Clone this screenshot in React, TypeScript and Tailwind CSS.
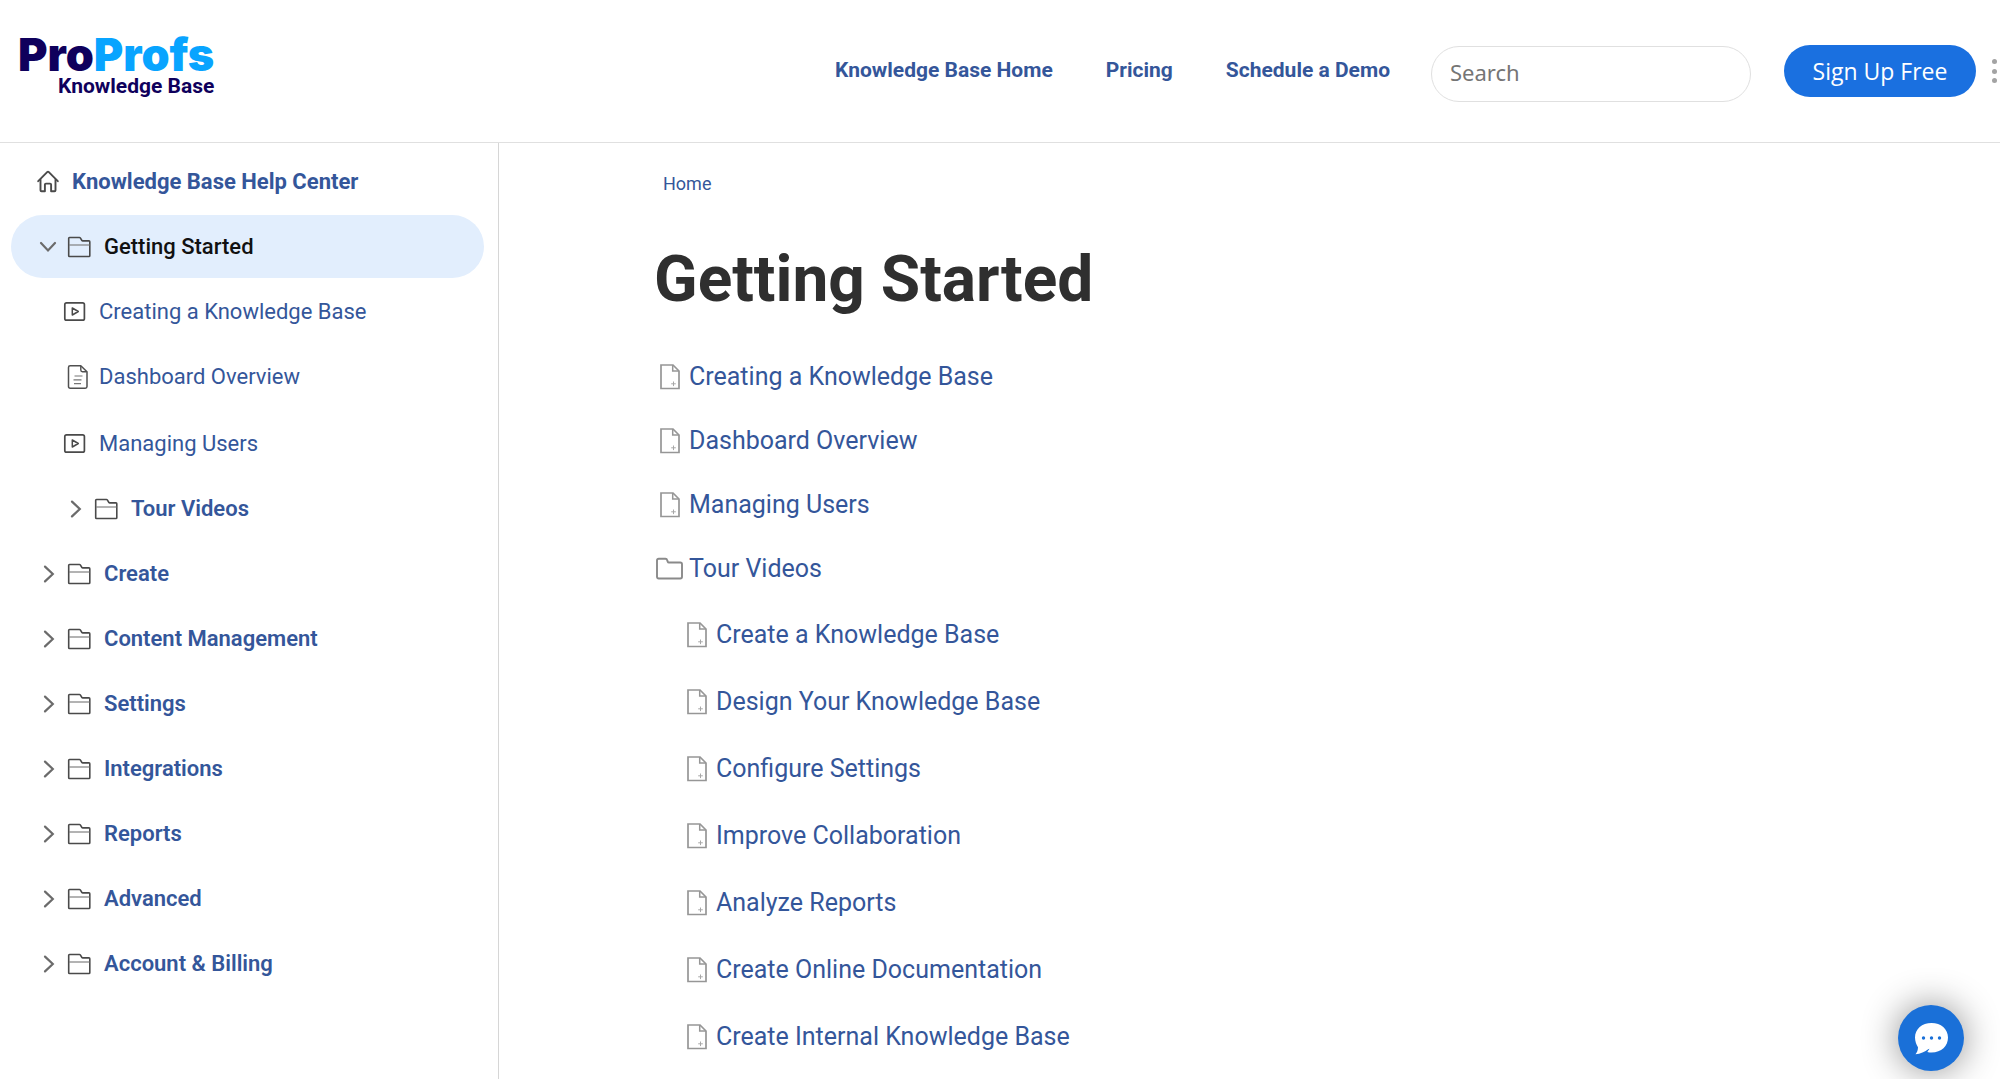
import React from "react";

function HomeIcon() {
  return (
    <svg className="h-6 w-6 shrink-0" viewBox="0 0 24 24" fill="none" stroke="#4a4a4a" strokeWidth="1.9" strokeLinejoin="round" strokeLinecap="round">
      <path d="M2.2 11.2 11.4 1.900q.6-.6 1.200 0l9.200 9.300" />
      <path d="M4.500 9.800v10.400q0 1 1 1h3.400v-6.600q0-1 1-1h4.200q1 0 1 1v6.600h3.400q1 0 1-1V9.800" />
    </svg>
  );
}

function ChevronDown() {
  return (
    <svg className="h-5 w-5 shrink-0" viewBox="0 0 20 20" fill="none" stroke="#6b6b6b" strokeWidth="2.2" strokeLinecap="round">
      <path d="M3 6 10 13.400 17 6" />
    </svg>
  );
}

function ChevronRight() {
  return (
    <svg className="h-5 w-5 shrink-0" viewBox="0 0 20 20" fill="none" stroke="#6b6b6b" strokeWidth="2.2" strokeLinecap="round">
      <path d="M7 2.600 14.800 10 7 17.400" />
    </svg>
  );
}

function FolderIcon() {
  return (
    <svg className="h-6 w-6 shrink-0" viewBox="0 0 24 24" fill="none" stroke="#4a4a4a" strokeLinejoin="round">
      <path strokeWidth="1.6" d="M1.700 3.300q0-.8.8-.8h10q.5 0 .8.4l1.600 2.600q.3.400.8.400h6.300q.8 0 .8.8v14q0 .8-.8.8H2.500q-.8 0-.8-.8z" />
      <path strokeWidth="1.2" stroke="#808080" d="M2 10h20.500" />
    </svg>
  );
}

function PlayIcon() {
  return (
    <svg className="h-6 w-6 shrink-0" viewBox="0 0 24 24" fill="none" stroke="#4a4a4a" strokeLinejoin="round">
      <rect strokeWidth="1.7" x="1.800" y="2.800" width="19.600" height="17.400" rx="1.800" />
      <path strokeWidth="1.5" d="M9.300 8v7l6-3.500z" />
    </svg>
  );
}

function ArticleIcon() {
  return (
    <svg className="h-6 w-6 shrink-0" viewBox="0 0 24 24" fill="none" stroke="#505050" strokeLinejoin="round">
      <path strokeWidth="1.5" d="M4.200.8h10.600l6.200 6v14.700q0 1.700-1.700 1.700H4.200q-1.700 0-1.700-1.700V2.500Q2.500.8 4.200.8z" />
      <path strokeWidth="1.400" d="M14.800.9v4.200q0 1.600 1.600 1.600h4.400" />
      <path strokeWidth="1.200" stroke="#777" d="M8.500 11h8M7.500 14.800h8M8 18.600h7" />
    </svg>
  );
}

function PageIcon() {
  return (
    <svg className="h-[26px] w-5 shrink-0" viewBox="0 0 20 26" fill="none" stroke="#969696">
      <path strokeWidth="1.700" d="M1 1h12l6 6v17.500H1z" />
      <path strokeWidth="1.500" d="M12.700 1v6H19" />
      <path strokeWidth="1" stroke="#a8a8a8" d="M13.500 17.500v4.600M11.200 19.800h4.600" />
    </svg>
  );
}

function OutlineFolder() {
  return (
    <svg className="h-[26px] w-7 shrink-0" viewBox="0 0 28 26" fill="none" stroke="#8a8a8a" strokeWidth="1.900" strokeLinejoin="round">
      <path d="M1 4.500Q1 2.800 2.700 2.800h6.800q1.300 0 1.700 1.300l.5 1.500q.3.900 1.200.9h11.400Q26 6.500 26 8.200v12.600q0 1.700-1.700 1.700H2.700Q1 22.500 1 20.800z" />
    </svg>
  );
}

const topics = ["Create", "Content Management", "Settings", "Integrations", "Reports", "Advanced", "Account & Billing"];
const articles = ["Creating a Knowledge Base", "Dashboard Overview", "Managing Users"];
const tourVideos = [
  "Create a Knowledge Base",
  "Design Your Knowledge Base",
  "Configure Settings",
  "Improve Collaboration",
  "Analyze Reports",
  "Create Online Documentation",
  "Create Internal Knowledge Base",
];

const row = "flex h-[63px] w-full items-center text-left";

function Topic({ label, nested = false }: { label: string; nested?: boolean }) {
  return (
    <li>
      <button type="button" aria-expanded="false" className={`${row} font-semibold ${nested ? "pl-[54px]" : "pl-[27px]"}`}>
        <ChevronRight />
        <span className="mr-[13px] ml-[9px]">
          <FolderIcon />
        </span>
        {label}
      </button>
    </li>
  );
}

function SidebarLink({ label, icon, indent }: { label: string; icon: React.ReactNode; indent: string }) {
  return (
    <a href="#" className={`${row} ${indent}`}>
      {icon}
      {label}
    </a>
  );
}

export default function App() {
  return (
    <div className="flex min-h-screen flex-col bg-white font-['Roboto',sans-serif] text-[#34569a]">
      <header className="flex h-[143px] shrink-0 items-start border-b border-[#e0e0e0] pr-[2px]">
        <a href="#" className="mt-[34px] ml-[18px] flex flex-col items-end text-[#0f005c]">
          <span className="font-['Inter',sans-serif] text-[45px] leading-[42px] font-black">
            Pro<span className="text-[#08a4ff]">Profs</span>
          </span>
          <span className="text-[21px] leading-5 font-bold">Knowledge Base</span>
        </a>
        <nav className="mt-14 ml-auto flex gap-[53px] text-[21px] leading-7 font-bold">
          <a href="#">Knowledge Base Home</a>
          <a href="#">Pricing</a>
          <a href="#">Schedule a Demo</a>
        </nav>
        <input
          type="search"
          aria-label="Search"
          placeholder="Search"
          className="mt-[46px] ml-[41px] h-14 w-80 rounded-full border border-[#e0e0e0] px-[18px] pb-1 font-['Noto_Sans',sans-serif] text-[22px] text-gray-700 placeholder:text-[#757575]"
        />
        <button
          type="button"
          className="mt-[45px] ml-[33px] h-[52px] w-48 rounded-full bg-[#1a70e0] font-['Open_Sans',sans-serif] text-[23px] text-white"
        >
          Sign Up Free
        </button>
        <button type="button" aria-label="More options" className="mt-[58px] ml-4 flex h-[26px] w-[6px] flex-col justify-between py-px">
          <span className="h-[5px] w-[5px] rounded-full bg-[#a3a3a3]" />
          <span className="h-[5px] w-[5px] rounded-full bg-[#a3a3a3]" />
          <span className="h-[5px] w-[5px] rounded-full bg-[#a3a3a3]" />
        </button>
      </header>

      <div className="flex flex-1">
        <aside className="w-1/4 max-w-[499px] shrink-0 border-r border-[#d6d6d6] pt-[7px] pr-3.5 pl-[11px] text-[22px]">
          <nav aria-label="Topics">
            <ul className="flex flex-col gap-0.5">
              <li>
                <a href="#" className={`${row} gap-3 pl-[25px] font-bold`}>
                  <HomeIcon />
                  Knowledge Base Help Center
                </a>
              </li>
              <li>
                <button type="button" aria-expanded="true" className={`${row} rounded-full bg-[#e2eefd] pl-[27px] font-medium text-[#111]`}>
                  <ChevronDown />
                  <span className="mr-[13px] ml-[9px]">
                    <FolderIcon />
                  </span>
                  Getting Started
                </button>
                <ul className="mt-0.5 flex flex-col gap-0.5">
                  <li>
                    <SidebarLink label="Creating a Knowledge Base" icon={<PlayIcon />} indent="gap-3 pl-[52px]" />
                  </li>
                  <li>
                    <SidebarLink label="Dashboard Overview" icon={<ArticleIcon />} indent="gap-[9px] pl-[55px]" />
                  </li>
                  <li className="mt-0.5">
                    <SidebarLink label="Managing Users" icon={<PlayIcon />} indent="gap-3 pl-[52px]" />
                  </li>
                  <Topic label="Tour Videos" nested />
                </ul>
              </li>
              {topics.map((topic) => (
                <Topic key={topic} label={topic} />
              ))}
            </ul>
          </nav>
        </aside>

        <main className="min-w-0 flex-1 pt-[27px] pr-10 pl-[157px]">
          <nav aria-label="Breadcrumb" className="pl-[7px] text-lg leading-7">
            <a href="#">Home</a>
          </nav>
          <h1 className="mt-[46px] -ml-0.5 text-[64px] leading-[72px] font-bold text-[#2f2f2f]">Getting Started</h1>
          <ul className="mt-[29px] text-[25px]">
            {articles.map((title) => (
              <li key={title}>
                <a href="#" className="flex h-16 items-center gap-[9px] pl-1">
                  <PageIcon />
                  {title}
                </a>
              </li>
            ))}
            <li>
              <a href="#" className="flex h-16 items-center gap-[5px]">
                <OutlineFolder />
                Tour Videos
              </a>
              <ul>
                {tourVideos.map((title) => (
                  <li key={title}>
                    <a href="#" className="flex h-[67px] items-center gap-[9px] pl-[31px]">
                      <PageIcon />
                      {title}
                    </a>
                  </li>
                ))}
              </ul>
            </li>
          </ul>
        </main>
      </div>

      <button
        type="button"
        aria-label="Open chat"
        className="fixed right-9 bottom-2 flex h-[66px] w-[66px] items-center justify-center rounded-full bg-[#1a70d8] shadow-[0_0_36px_rgba(0,0,0,0.45)]"
      >
        <svg className="h-9 w-9" viewBox="0 0 36 36">
          <path fill="#fff" d="M18.500 3C9 3 2 9 2 17.500c0 4 1.500 7.300 3 9.700 0 3-1 5.300-2.500 7 4.800-.3 9.500-2.200 13-5.200l1-.3-2.200 3.200c1.400.4 2.800.6 4.200.6C28.500 32.500 35 26 35 17.500 35 9 28 3 18.500 3z" />
          <g fill="#1a70d8">
            <circle cx="10.500" cy="18" r="1.700" />
            <circle cx="18.500" cy="18" r="1.700" />
            <circle cx="26.500" cy="18" r="1.700" />
          </g>
        </svg>
      </button>
    </div>
  );
}
